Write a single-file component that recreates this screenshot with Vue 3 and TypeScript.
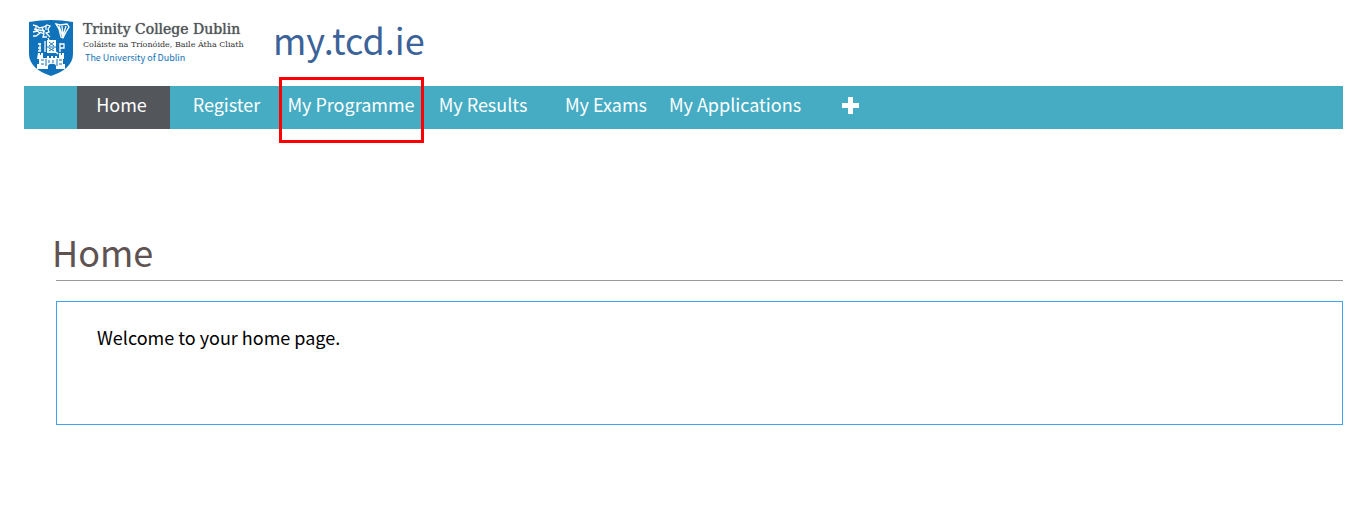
<script setup lang="ts">
import { ref } from 'vue'

interface NavItem {
  label: string
  marked?: boolean
}

const items: NavItem[] = [
  { label: 'Home' },
  { label: 'Register' },
  { label: 'My Programme', marked: true },
  { label: 'My Results' },
  { label: 'My Exams' },
  { label: 'My Applications' },
]
const current = ref('Home')
</script>

<template>
  <div class="page">
    <header class="masthead">
      <a href="#" class="brand" aria-label="Trinity College Dublin">
        <svg class="shield" viewBox="0 0 44 56" width="44" height="56" aria-hidden="true">
          <path d="M0 2Q11 0 22 0T44 2V34C44 45 34 52 22 56C10 52 0 45 0 34Z" fill="#1072ba" />
          <g stroke="#fff" fill="none" stroke-width="1.3">
            <path d="M4 5l4 1 2 2 5-1 3-2 3 1-2 3 1 3-3 1 4 4M5 9l5 1 6 1M4 12l4-1 3 2-4 3H4M11 12l4 2-1 3h4M7 6v5M13 7l2 6M17 5v5" />
            <path d="M27 4l4 1 7-1 2 3-3 5-3 6-2-1-2-8zM30 6l4 11M33 6l1 9M37 6l-3 10" />
            <path d="M9 24h3M9 28h3M9 31h3M11 23v8M31 23v9M31 24h4v4h-4M16 21v11" />
            <path d="M20 20l-1-2M27 32l2 2" />
          </g>
          <path d="M18 20h9v13h-9z" fill="#fff" />
          <path d="M20 22l5 4M25 22l-5 4M20 28l5 3M25 28l-5 3M18 27h9" stroke="#1072ba" fill="none" />
          <path d="M9 33h2v2h1v-2h2v5h4v-2h2v2h2v-2h2v2h2v-2h2v2h2v-5h2v2h1v-2h2v6h-1v5h2v5h-9v-3c0-3-8-3-8 0v3h-11v-5h2v-5h-2z" fill="#fff" />
          <path d="M12 40h3M30 40h3M17 39v7M20 40v3M24 40v3M28 39v7M12 44h3M30 44h3" stroke="#1072ba" fill="none" />
        </svg>
        <span class="names">
          <span class="name-en">Trinity College Dublin</span>
          <span class="name-ga" lang="ga">Coláiste na Tríonóide, Baile Átha Cliath</span>
          <span class="name-uni">The University of Dublin</span>
        </span>
      </a>
      <span class="site">my.tcd.ie</span>
    </header>

    <nav class="bar" aria-label="Main">
      <a
        v-for="item in items"
        :key="item.label"
        href="#"
        class="tab"
        :class="{ active: item.label === current, marked: item.marked }"
        :aria-current="item.label === current ? 'page' : undefined"
        @click.prevent="current = item.label"
      >{{ item.label }}</a>
      <button type="button" class="more" aria-label="More">
        <svg viewBox="0 0 17 17" width="17" height="17" aria-hidden="true">
          <path d="M6 0h5v6h6v5h-6v6H6v-6H0V6h6z" fill="#fff" />
        </svg>
      </button>
    </nav>

    <main class="content">
      <h1>Home</h1>
      <section class="panel">
        <p>Welcome to your home page.</p>
      </section>
    </main>
  </div>
</template>

<style>
body {
  background: #fff;
}
</style>

<style scoped>
.page {
  padding: 0 15px 0 24px;
  font-family: "Noto Sans CJK SC", "Noto Sans", sans-serif;
}
.masthead {
  display: flex;
  height: 86px;
}
.brand {
  display: flex;
  gap: 10px;
  width: 244px;
  padding: 20px 0 0 5px;
  text-decoration: none;
  white-space: nowrap;
}
.shield {
  flex: none;
}
.names {
  display: flex;
  flex-direction: column;
}
.name-en {
  font: 14px/18px "DejaVu Serif", serif;
  color: #53565a;
  text-shadow: 0 0 1px #53565a;
}
.name-ga {
  font: 8px/14px "DejaVu Serif", serif;
  color: #333;
}
.name-uni {
  padding-left: 2px;
  font-size: 9px;
  line-height: 12px;
  color: #1072ba;
}
.site {
  padding-top: 12px;
  font-size: 36px;
  line-height: 54px;
  color: #3c6399;
}
.bar {
  display: grid;
  grid-template-columns: 93px 113px 136px 128px 118px 140px 91px;
  height: 43px;
  padding-left: 53px;
  background: #45acc4;
}
.tab {
  position: relative;
  font-size: 18px;
  line-height: 36px;
  text-align: center;
  white-space: nowrap;
  color: #fff;
  text-decoration: none;
}
.tab.active {
  padding-right: 4px;
  background: #53565a;
}
.tab.marked::after {
  content: "";
  position: absolute;
  inset: -9px -5px -14px -4px;
  border: 3px solid #f00;
}
.more {
  display: flex;
  justify-content: center;
  padding: 11px 0 0;
  border: 0;
  background: none;
}
.content {
  padding: 95px 0 0 32px;
}
h1 {
  margin: 0 0 20px;
  padding-bottom: 2px;
  border-bottom: 1px solid #999;
  font-size: 36px;
  line-height: 54px;
  font-weight: 400;
  color: #5e5352;
  text-indent: -4px;
}
.panel {
  min-height: 122px;
  border: 1px solid #3fa4f0;
}
.panel p {
  margin: 0;
  padding: 22px 40px;
  font-size: 18px;
  line-height: 26px;
  color: #000;
}
</style>
